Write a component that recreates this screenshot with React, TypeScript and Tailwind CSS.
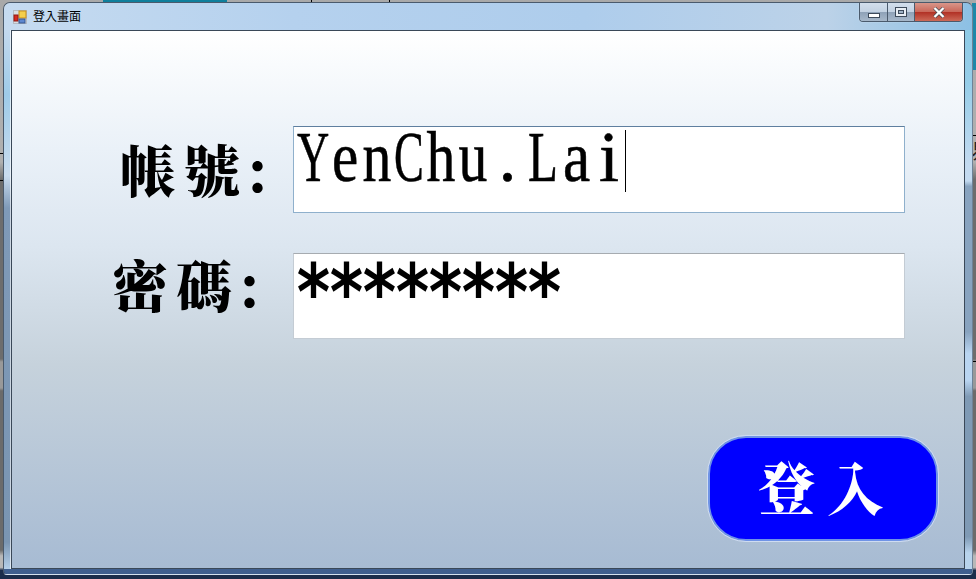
const cjk = "font-['Noto_Serif_CJK_TC','Noto_Sans_CJK_TC','Noto_Sans_CJK_SC',serif]";

// half width glyph cells, the wide latin letters get squeezed to fit
const account = [
  { ch: "Y", cell: "w-[32px] scale-x-[0.62]" },
  { ch: "e", cell: "w-[32px] scale-x-[0.82]" },
  { ch: "n", cell: "w-[32px] scale-x-[0.8]" },
  { ch: "C", cell: "w-[32px] scale-x-[0.62]" },
  { ch: "h", cell: "w-[32px] scale-x-[0.8]" },
  { ch: "u", cell: "w-[32px] scale-x-[0.8]" },
  { ch: ".", cell: "w-[37px] scale-x-100" },
  { ch: "L", cell: "w-[34px] scale-x-[0.68]" },
  { ch: "a", cell: "w-[33px] scale-x-[0.85]" },
  { ch: "i", cell: "w-[32px] scale-x-100" },
];

const AppIcon = () => (
  <svg width="14" height="14" viewBox="0 0 14 14">
    <rect x="0.5" y="0.5" width="13" height="13" fill="#d9dde2" stroke="#b5bac2" />
    <rect x="6" y="1" width="7" height="7" fill="#f4cf4c" stroke="#c78f1c" />
    <rect x="1" y="5" width="4" height="6" fill="#d8281f" stroke="#8e1a14" />
    <rect x="6" y="9" width="6" height="4" fill="#5f88cf" stroke="#34568f" />
  </svg>
);

const WindowButtons = () => (
  <div className="absolute right-[9px] top-0 flex h-[19px] overflow-hidden rounded-b-[4px] border border-t-0 border-[#4a5a6c] shadow-[0_0_1px_#ffffff]">
    <div className="flex w-[28px] items-end justify-center border-r border-[#4a5a6c] bg-[linear-gradient(#d3dfec_0%,#c3d2e2_48%,#8fa2b8_52%,#a7b8ca_100%)] pb-[3px]">
      <div className="h-[5px] w-[12px] border border-[#3d4a5a] bg-white"></div>
    </div>
    <div className="flex w-[27px] items-center justify-center border-r border-[#4a5a6c] bg-[linear-gradient(#d3dfec_0%,#c3d2e2_48%,#8fa2b8_52%,#a7b8ca_100%)]">
      <div className="flex h-[10px] w-[12px] items-center justify-center border border-[#3d4a5a] bg-[#e8eef4]">
        <div className="h-[4px] w-[6px] border border-[#3d4a5a] bg-[#9fb2c6]"></div>
      </div>
    </div>
    <div className="flex w-[47px] items-center justify-center bg-[linear-gradient(#d9968a_0%,#c9685a_48%,#b23226_52%,#cc6a58_100%)]">
      <svg width="12" height="11" viewBox="0 0 12 11">
        <path d="M1.5 1 L10.5 10 M10.5 1 L1.5 10" stroke="#3f4a55" strokeWidth="3.6" />
        <path d="M1.5 1 L10.5 10 M10.5 1 L1.5 10" stroke="#ffffff" strokeWidth="2.4" />
      </svg>
    </div>
  </div>
);

export default function App() {
  return (
    <div className="relative h-[579px] w-[976px] overflow-hidden bg-[linear-gradient(#a9a9a9_0%,#b0b0b0_28%,#6d6d6d_31%,#6d6d6d_62%,#999999_62.5%,#999999_67%,#6b6b6b_67.5%,#6b6b6b_95%,#b8b8b8_96%,#b8b8b8_98%,#1b2d4b_98.5%)]">
      {/* bits of the desktop that show around the window */}
      <div className="absolute left-[103px] top-0 h-[2px] w-[124px] bg-[#0f7f9c]"></div>
      <div className="absolute left-[311px] top-0 h-[2px] w-px bg-black"></div>
      <div className="absolute left-[389px] top-0 h-[2px] w-px bg-black"></div>
      <div className="absolute left-0 top-[153px] h-px w-[4px] bg-black"></div>
      <div className="absolute left-0 top-[180px] h-px w-[4px] bg-black"></div>
      <div className="absolute right-0 top-[3px] h-[67px] w-[4px] bg-[#1f88a8]"></div>
      <div className="absolute right-0 top-[135px] h-px w-[4px] bg-black"></div>
      <div className="absolute right-0 top-[361px] h-px w-[4px] bg-black"></div>
      <div className="absolute left-[971px] top-[141px] text-[20px] leading-none text-[#222] font-['Noto_Sans_CJK_TC',sans-serif]">
        易
      </div>

      {/* window */}
      <div className="relative ml-[3px] mt-[2px] flex h-[573px] w-[970px] flex-col overflow-hidden rounded-t-[7px] rounded-b-[4px] border border-[#4a5a6c] border-b-[#d5e2f0] border-r-[#6f8297]">
        <div className="relative flex h-[27px] shrink-0 items-center gap-[6px] bg-[linear-gradient(90deg,#c6dbf0_0%,#b5d1ee_30%,#aecdec_60%,#bcd2e8_85%,#8cc0e4_100%)] pl-[9px]">
          <AppIcon />
          <span className="-mt-[2px] text-[12px] leading-none text-black font-['Noto_Sans_CJK_TC',sans-serif]">
            登入畫面
          </span>
          <WindowButtons />
        </div>

        <div className="flex min-h-0 flex-1">
          <div className="w-[7px] shrink-0 bg-[linear-gradient(#c4d9ee_0%,#9ecbe8_12%,#c9dcef_27%,#7f9ab8_33%,#7a95b2_95%,#b5d0ea_100%)]"></div>

          {/* client area */}
          <div className="flex flex-1 flex-col border border-[#3a4858] bg-[linear-gradient(#ffffff_0%,#eaf1f8_22%,#dce6f0_40%,#c6d2dc_62%,#a7bbd3_100%)] shadow-[0_0_0_1px_rgba(255,255,255,0.6)]">
            <div className="flex items-stretch pt-[95px]">
              <div className={`mt-[4px] w-[281px] pl-[108px] text-[56px] font-black leading-[76px] tracking-[8px] text-black ${cjk}`}>
                帳號:
              </div>
              <div className="flex h-[87px] w-[612px] border border-[#8fb0cc] border-t-[#5f7f9f] bg-white pl-[3px] font-['Liberation_Serif',serif] text-[72px] leading-[60px] text-black [-webkit-text-stroke:0.6px_#000]">
                {account.map((item, i) => (
                  <span key={i} className={`inline-block h-[60px] text-center ${item.cell}`}>
                    <span className="-mx-[20px]">{item.ch}</span>
                  </span>
                ))}
                <span className="mt-[3px] h-[62px] w-px bg-black"></span>
              </div>
            </div>

            <div className="mt-[40px] flex items-stretch">
              <div className={`-mt-[8px] w-[281px] pl-[100px] text-[56px] font-black leading-[76px] tracking-[8px] text-black ${cjk}`}>
                密碼:
              </div>
              <div className="flex h-[86px] w-[612px] border border-[#c4ccd4] border-t-[#a6abb0] bg-white pl-[3px] pt-[6px] font-['DejaVu_Sans',sans-serif] text-[78px] font-bold leading-[66px] text-black">
                {"********".split("").map((ch, i) => (
                  <span key={i} className="inline-block h-[66px] w-[33px] scale-x-[0.82] text-center">
                    <span className="-mx-[10px]">{ch}</span>
                  </span>
                ))}
              </div>
            </div>

            <button className={`mb-[27px] mr-[26px] mt-auto flex h-[105px] w-[230px] items-center justify-center self-end rounded-[38px] border-2 border-[#6f93e6] bg-[#0000ff] pb-[6px] pl-[8px] text-[57px] font-black leading-none tracking-[12px] text-white outline outline-1 outline-[#cfdcf2] ${cjk}`}>
              登入
            </button>
          </div>

          <div className="w-[7px] shrink-0 bg-[linear-gradient(#8fcbe6_0%,#96cde8_10%,#c3daf0_25%,#c3daf0_28%,#88a3bf_29%,#88a3bf_56%,#b9d5f1_60%,#b9d5f1_65%,#7f9ab5_68%,#7f9ab5_94%,#b8d3ec_97%)]"></div>
        </div>

        <div className="h-[5px] shrink-0 bg-[#3f5f8f]"></div>
      </div>
    </div>
  );
}
